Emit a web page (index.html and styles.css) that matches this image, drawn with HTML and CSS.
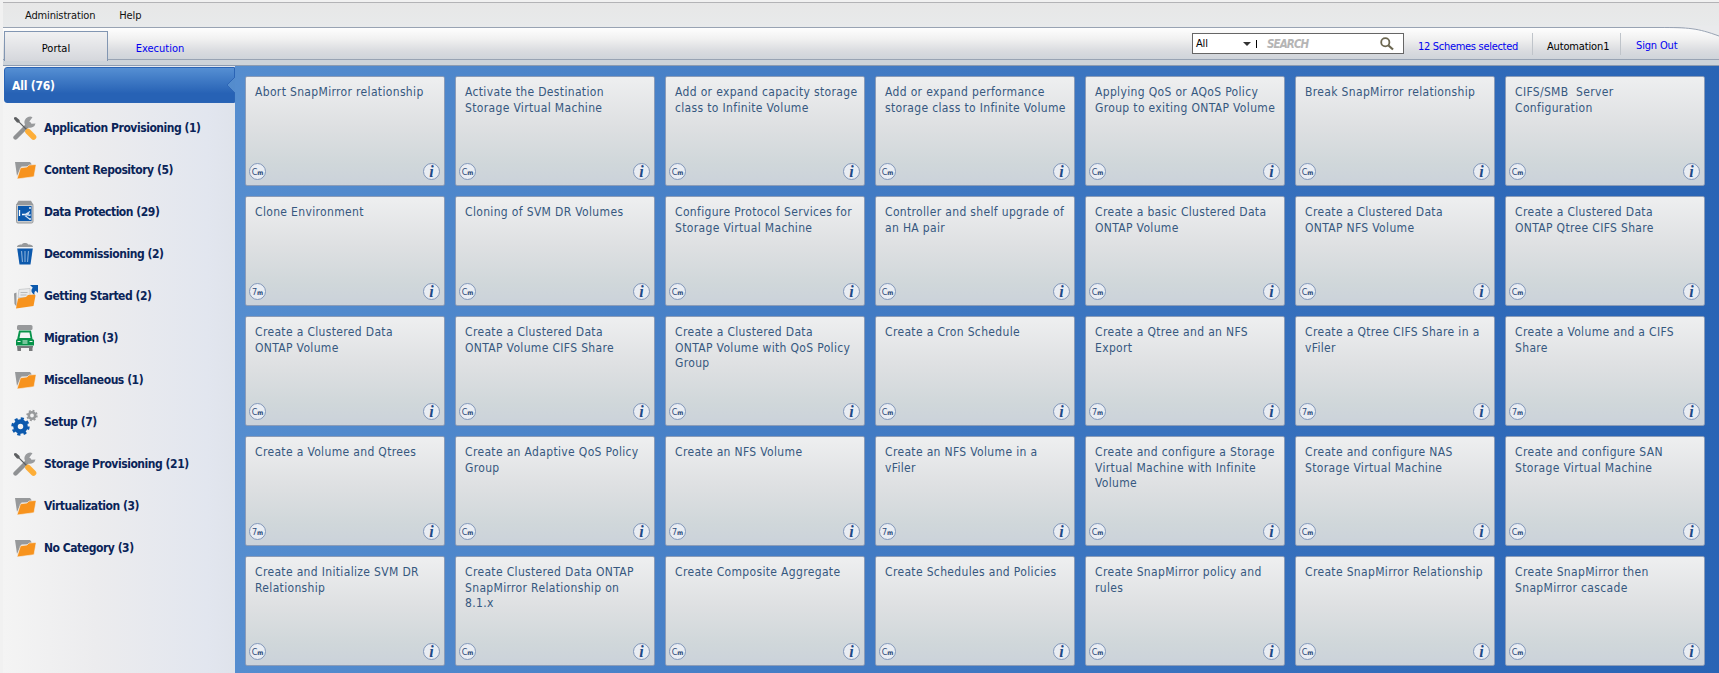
FILE: index.html
```
<!DOCTYPE html>
<html lang="en">
<head>
<meta charset="utf-8">
<title>Portal</title>
<link rel="stylesheet" href="styles.css">
</head>
<body>
<svg class="defs" width="0" height="0">
  <symbol id="tools" viewBox="0 0 24 24">
    <path d="M2.500 21.500L16 8" stroke="#8f9193" stroke-width="4.400" stroke-linecap="round" fill="none"/>
    <path d="M19.500 1.200a5.600 5.600 0 1 0 3 6.200l-4.200.4-2-2.300z" fill="#999b9d"/>
    <path d="M1 1.500l2-.5 3.500 3 .3 2L15 14l-1 1-8-8.200-2-.3-3-3.500z" fill="#5d5f61"/>
    <path d="M15 15.500l5.500 5.500" stroke="#fdae38" stroke-width="5.600" stroke-linecap="round"/>
  </symbol>
  <symbol id="folder" viewBox="0 0 24 24">
    <path d="M2 4h15l1.500 2v2.500H8.500L4 18z" fill="#97999b"/>
    <path d="M7.500 9.800l6.500-.8 2-2 6.500-.5.500 1-2 11.200L4 21z" fill="#f7931e" stroke="#f3f3f4" stroke-width=".6"/>
  </symbol>
  <symbol id="protect" viewBox="0 0 24 24">
    <rect x="3.500" y="4" width="16.500" height="19" rx="1.500" fill="#c9cbcd" stroke="#97999b"/>
    <path d="M5.500 .8h12.500l2.500 4.200h-17.500z" fill="#97999b"/>
    <rect x="5" y="6" width="13.500" height="15" fill="#0c59ad"/>
    <path d="M6.500 10v6M9 14.500h3M17 7v2M17 18v2" stroke="#fff" stroke-width="1.300"/>
    <path d="M17 11.500l-5 3 5 1M16 13l-3.500 3 4 3M12 15h6" stroke="#d6e4f3" stroke-width="1.100" fill="none"/>
  </symbol>
  <symbol id="trash" viewBox="0 0 24 24">
    <path d="M4 5c0-2 3-2.500 5-2.500C9 .5 15 .5 15 2.500c2 0 5 .5 5 2.500z" fill="#97999b"/>
    <path d="M4.200 6.500h15.600L17.500 22.500H6.500z" fill="#0c59ad"/>
    <path d="M8.500 9l1 11M12 9v11M15.500 9l-1 11" stroke="#7fa9d6" stroke-width="1.200"/>
  </symbol>
  <symbol id="start" viewBox="0 0 26 25">
    <path d="M1 9.500l2.500-1v14L1.500 20z" fill="#97999b"/>
    <path d="M6 5.500l11-1v9H5z" fill="#e9eaec" stroke="#c4c6c8" stroke-width=".8"/>
    <path d="M7.500 8.500h7M7.500 11h6" stroke="#b8babc"/>
    <path d="M5 14.500l8-1.500 2-2 6.500-.5 1 1L20.500 22 3 24.500z" fill="#f7931e"/>
    <path d="M17 1h8v8l-2.300-2.300c-1.200.9-1.500 2-1.200 4-3.700-1.900-3.700-5.300-1.700-7z" fill="#0c59ad"/>
  </symbol>
  <symbol id="truck" viewBox="0 0 24 28">
    <rect x="4" y="1" width="15.500" height="5" rx="1.500" fill="#97999b"/>
    <path d="M6 6.500h12l1.500 8.500 1.500 1v5.500H3V16l1.200-1z" fill="#07934a"/>
    <path d="M7.500 8.500h9l1 5.500h-11z" fill="#f3f5f6"/>
    <path d="M4.500 17.500h3M16.500 17.500h3M9.500 17h5M9.500 19h5" stroke="#e7f5ec" stroke-width="1.200"/>
    <path d="M4 22h16v1.500h-.500V27h-3.500v-3H8v3H4.500z" fill="#77797b"/>
  </symbol>
  <symbol id="gears" viewBox="0 0 27 27">
    <circle cx="9.500" cy="17.500" r="5" fill="none" stroke="#0c59ad" stroke-width="4.500"/>
    <circle cx="9.500" cy="17.500" r="7.900" fill="none" stroke="#0c59ad" stroke-width="2.600" stroke-dasharray="3.100 3.104"/>
    <circle cx="21" cy="6.500" r="3.200" fill="none" stroke="#97999b" stroke-width="2.600"/>
    <circle cx="21" cy="6.500" r="4.900" fill="none" stroke="#97999b" stroke-width="1.600" stroke-dasharray="1.920 1.928"/>
  </symbol>
</svg>

<nav class="menubar"><a>Administration</a><a>Help</a></nav>

<header class="tabbar">
  <svg class="swoosh" width="60" height="14" viewBox="0 0 60 14"><path d="M0 0h60v10C40 2 30 1.500 0 1.500z" fill="#e9eaec"/><path d="M0 1.500C30 1.500 38 2 60 10" fill="none" stroke="#98a3b3"/></svg>
  <a class="tab active">Portal</a>
  <a class="tab">Execution</a>
  <div class="search">
    <span class="scope">All</span><i class="caret"></i><i class="bar"></i>
    <span class="hint">SEARCH</span>
    <svg class="lens" width="14" height="14" viewBox="0 0 14 14"><circle cx="5.300" cy="5.300" r="4.100" fill="none" stroke="#6b6650" stroke-width="1.800"/><path d="M8.500 8.500l4.500 4" stroke="#6b6650" stroke-width="2.200"/></svg>
  </div>
  <a class="schemes">12 Schemes selected</a>
  <span class="user">Automation1</span>
  <a class="signout">Sign Out</a>
</header>
<div class="strip"></div>

<div class="main">
  <aside class="side">
    <div class="all">All (76)<svg class="notch" width="9" height="18" viewBox="0 0 9 18"><path d="M9 1L1 9l8 8z" fill="#548ccd"/><path d="M9 1L1 9l8 8" fill="none" stroke="#2e66b6"/></svg></div>
    <a class="cat"><svg class="ic"><use href="#tools"/></svg>Application Provisioning (1)</a>
    <a class="cat"><svg class="ic"><use href="#folder"/></svg>Content Repository (5)</a>
    <a class="cat"><svg class="ic"><use href="#protect"/></svg>Data Protection (29)</a>
    <a class="cat"><svg class="ic"><use href="#trash"/></svg>Decommissioning (2)</a>
    <a class="cat"><svg class="ic start"><use href="#start"/></svg>Getting Started (2)</a>
    <a class="cat"><svg class="ic truck"><use href="#truck"/></svg>Migration (3)</a>
    <a class="cat"><svg class="ic"><use href="#folder"/></svg>Miscellaneous (1)</a>
    <a class="cat"><svg class="ic gears"><use href="#gears"/></svg>Setup (7)</a>
    <a class="cat"><svg class="ic"><use href="#tools"/></svg>Storage Provisioning (21)</a>
    <a class="cat"><svg class="ic"><use href="#folder"/></svg>Virtualization (3)</a>
    <a class="cat"><svg class="ic"><use href="#folder"/></svg>No Category (3)</a>
  </aside>
  <section class="grid">
    <article class="card"><p>Abort SnapMirror relationship</p><b class="mode">C<small>m</small></b><i class="info">i</i></article>
    <article class="card"><p>Activate the Destination<br>Storage Virtual Machine</p><b class="mode">C<small>m</small></b><i class="info">i</i></article>
    <article class="card"><p>Add or expand capacity storage<br>class to Infinite Volume</p><b class="mode">C<small>m</small></b><i class="info">i</i></article>
    <article class="card"><p>Add or expand performance<br>storage class to Infinite Volume</p><b class="mode">C<small>m</small></b><i class="info">i</i></article>
    <article class="card"><p>Applying QoS or AQoS Policy<br>Group to exiting ONTAP Volume</p><b class="mode">C<small>m</small></b><i class="info">i</i></article>
    <article class="card"><p>Break SnapMirror relationship</p><b class="mode">C<small>m</small></b><i class="info">i</i></article>
    <article class="card"><p>CIFS/SMB&nbsp; Server<br>Configuration</p><b class="mode">C<small>m</small></b><i class="info">i</i></article>

    <article class="card"><p>Clone Environment</p><b class="mode">7<small>m</small></b><i class="info">i</i></article>
    <article class="card"><p>Cloning of SVM DR Volumes</p><b class="mode">C<small>m</small></b><i class="info">i</i></article>
    <article class="card"><p>Configure Protocol Services for<br>Storage Virtual Machine</p><b class="mode">C<small>m</small></b><i class="info">i</i></article>
    <article class="card"><p>Controller and shelf upgrade of<br>an HA pair</p><b class="mode">C<small>m</small></b><i class="info">i</i></article>
    <article class="card"><p>Create a basic Clustered Data<br>ONTAP Volume</p><b class="mode">C<small>m</small></b><i class="info">i</i></article>
    <article class="card"><p>Create a Clustered Data<br>ONTAP NFS Volume</p><b class="mode">C<small>m</small></b><i class="info">i</i></article>
    <article class="card"><p>Create a Clustered Data<br>ONTAP Qtree CIFS Share</p><b class="mode">C<small>m</small></b><i class="info">i</i></article>

    <article class="card"><p>Create a Clustered Data<br>ONTAP Volume</p><b class="mode">C<small>m</small></b><i class="info">i</i></article>
    <article class="card"><p>Create a Clustered Data<br>ONTAP Volume CIFS Share</p><b class="mode">C<small>m</small></b><i class="info">i</i></article>
    <article class="card"><p>Create a Clustered Data<br>ONTAP Volume with QoS Policy<br>Group</p><b class="mode">C<small>m</small></b><i class="info">i</i></article>
    <article class="card"><p>Create a Cron Schedule</p><b class="mode">C<small>m</small></b><i class="info">i</i></article>
    <article class="card"><p>Create a Qtree and an NFS<br>Export</p><b class="mode">7<small>m</small></b><i class="info">i</i></article>
    <article class="card"><p>Create a Qtree CIFS Share in a<br>vFiler</p><b class="mode">7<small>m</small></b><i class="info">i</i></article>
    <article class="card"><p>Create a Volume and a CIFS<br>Share</p><b class="mode">7<small>m</small></b><i class="info">i</i></article>

    <article class="card"><p>Create a Volume and Qtrees</p><b class="mode">7<small>m</small></b><i class="info">i</i></article>
    <article class="card"><p>Create an Adaptive QoS Policy<br>Group</p><b class="mode">C<small>m</small></b><i class="info">i</i></article>
    <article class="card"><p>Create an NFS Volume</p><b class="mode">7<small>m</small></b><i class="info">i</i></article>
    <article class="card"><p>Create an NFS Volume in a<br>vFiler</p><b class="mode">7<small>m</small></b><i class="info">i</i></article>
    <article class="card"><p>Create and configure a Storage<br>Virtual Machine with Infinite<br>Volume</p><b class="mode">C<small>m</small></b><i class="info">i</i></article>
    <article class="card"><p>Create and configure NAS<br>Storage Virtual Machine</p><b class="mode">C<small>m</small></b><i class="info">i</i></article>
    <article class="card"><p>Create and configure SAN<br>Storage Virtual Machine</p><b class="mode">C<small>m</small></b><i class="info">i</i></article>

    <article class="card"><p>Create and Initialize SVM DR<br>Relationship</p><b class="mode">C<small>m</small></b><i class="info">i</i></article>
    <article class="card"><p>Create Clustered Data ONTAP<br>SnapMirror Relationship on<br>8.1.x</p><b class="mode">C<small>m</small></b><i class="info">i</i></article>
    <article class="card"><p>Create Composite Aggregate</p><b class="mode">C<small>m</small></b><i class="info">i</i></article>
    <article class="card"><p>Create Schedules and Policies</p><b class="mode">C<small>m</small></b><i class="info">i</i></article>
    <article class="card"><p>Create SnapMirror policy and<br>rules</p><b class="mode">C<small>m</small></b><i class="info">i</i></article>
    <article class="card"><p>Create SnapMirror Relationship</p><b class="mode">C<small>m</small></b><i class="info">i</i></article>
    <article class="card"><p>Create SnapMirror then<br>SnapMirror cascade</p><b class="mode">C<small>m</small></b><i class="info">i</i></article>
  </section>
</div>
</body>
</html>
```
FILE: styles.css
```
* { box-sizing: border-box; }
body {
  margin: 0;
  padding: 2px 0 0 3px;
  height: 673px;
  overflow: hidden;
  background: #f1f1f1;
  color: #111;
  font: 11px/14px "DejaVu Sans Condensed", "Noto Sans", sans-serif;
  letter-spacing: -.15px;
}
.defs { position: absolute; }
.menubar {
  display: flex;
  gap: 24px;
  height: 25px;
  padding: 6px 0 0 22px;
  border-top: 1px solid #b3b3b6;
  background: linear-gradient(#e7e7e7, #e8eaeb);
}
.tabbar {
  position: relative;
  display: flex;
  align-items: flex-start;
  height: 33px;
  border-top: 1px solid #98a3b3;
  border-bottom: 1px solid #98a3b3;
  background: linear-gradient(#fefefe, #f1f1f1 35%, #d9dbdf 75%, #cfd4da);
  color: #000;
}
.tabbar a { color: #0000f0; }
.swoosh { position: absolute; right: 0; top: -2px; }
.tab {
  width: 104px;
  height: 32px;
  padding-top: 14px;
  text-align: center;
  letter-spacing: 0;
}
.tabbar .active {
  height: 30px;
  margin: 3px 0 0 1px;
  padding-top: 10px;
  border: 1px solid #8296b2;
  border-bottom: 0;
  background: linear-gradient(#f1f1f2, #d5d7dc);
  color: #000;
}
.search {
  display: flex;
  align-items: center;
  width: 212px;
  height: 21px;
  margin: 5px 0 0 980px;
  padding: 0 9px 0 3px;
  border: 1px solid #666;
  background: #fff;
}
.scope { width: 47px; }
.caret { border: 4px solid transparent; border-top-color: #333; border-bottom: 0; }
.bar { width: 1px; height: 8px; margin: 0 10px 0 5px; background: #000; }
.hint { flex: 1; color: #b5b5b5; font-weight: bold; font-style: italic; font-size: 11.500px; letter-spacing: -.9px; }
.schemes { width: 115px; height: 22px; margin: 5px 0 0 14px; padding-top: 7px; border-right: 1px solid #bfc4ca; white-space: nowrap; letter-spacing: -.3px; }
.user { width: 88px; height: 22px; margin-top: 5px; padding: 7px 0 0 14px; border-right: 1px solid #bfc4ca; }
.signout { margin: 11px 0 0 15px; }
.strip { height: 6px; border-bottom: 1px solid #8c9bb0; background: #cdd3d9; }
.main { display: flex; height: 607px; }
.side {
  width: 232px;
  padding-top: 1px;
  background: linear-gradient(90deg, #f4f4f4, #ececee 40%, #e2e6ef 88%, #dfe3eb);
}
.all {
  position: relative;
  height: 36px;
  margin: 0 0 4px 1px;
  padding: 11px 0 0 7px;
  border: 1px solid #2a64b5;
  border-radius: 3px 0 0 3px;
  background: linear-gradient(#558fd3, #2762b5 75%);
  color: #fff;
  font: bold 12px/15px "DejaVu Sans Condensed", "Noto Sans", sans-serif;
  letter-spacing: -.2px;
}
.notch { position: absolute; right: -1px; top: 8px; }
.cat {
  display: flex;
  align-items: center;
  gap: 7px;
  height: 42px;
  padding-left: 10px;
  color: #0a2458;
  font: bold 12px/15px "DejaVu Sans Condensed", "Noto Sans", sans-serif;
  letter-spacing: -.46px;
  white-space: nowrap;
}
.ic { width: 24px; height: 24px; }
.start { width: 26px; height: 25px; margin: 0 -2px 0 0; }
.truck { height: 28px; }
.gears { width: 27px; height: 27px; margin: 0 -1px 0 -2px; }
.grid {
  flex: 1;
  display: grid;
  grid-template-columns: repeat(7, 200px);
  grid-auto-rows: 110px;
  gap: 10px;
  padding: 10px;
  background: linear-gradient(90deg, #558dcf, #3f78c2 50%, #2964b5);
}
.card {
  display: grid;
  grid-template-columns: 1fr 1fr;
  grid-template-rows: 1fr 17px;
  padding: 8px 4px 5px 3px;
  border: 1px solid #8b9cb8;
  border-radius: 2px;
  background: linear-gradient(#eeeff0, #dee0e2 45%, #d0d7da 80%, #cbd2da);
}
.card p {
  grid-column: 1 / 3;
  margin: 0 0 0 6px;
  color: #36587f;
  font: 12px/15.700px "DejaVu Sans Condensed", "Noto Sans", sans-serif;
  letter-spacing: .34px;
  white-space: nowrap;
}
.mode, .info {
  display: flex;
  align-items: center;
  justify-content: center;
  width: 17px;
  height: 17px;
  border: 1px solid #8297ba;
  border-radius: 50%;
  background: #e9edf3;
  color: #2c4a78;
}
.mode { font: 9px/14px "DejaVu Sans Condensed", "Noto Sans", sans-serif; letter-spacing: -.2px; }
.mode small { padding-top: 2px; font-size: 6.500px; font-weight: bold; }
.info { justify-self: end; font: italic bold 16px/15px "Liberation Serif", serif; color: #1f4a86; letter-spacing: 0; }
```
